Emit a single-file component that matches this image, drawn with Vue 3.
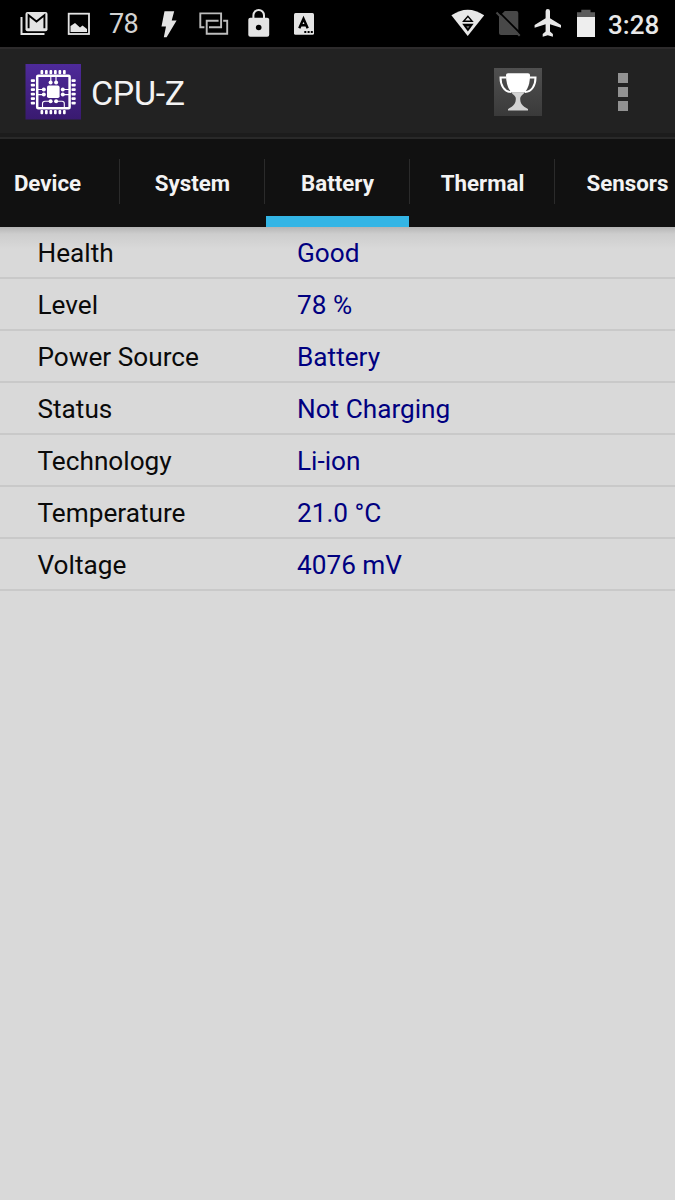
<template>
    <div class="screen">
        <!-- Barra de estado -->
        <div class="status-bar">
            <div class="notifications">
                <svg class="icon" width="30" height="46" viewBox="19 0 30 46">
                    <path d="M21.5 17V34H44.5" fill="none" stroke="#e4e4e4" stroke-width="2" />
                    <rect x="25.5" y="12" width="22" height="19.3" rx="2" fill="#e4e4e4" />
                    <path d="M28.6 28.3V15.2L36.5 21.6L44.4 15.2V28.3" fill="none" stroke="#000" stroke-width="1.9" />
                </svg>
                <svg class="icon picture" width="24" height="46" viewBox="67 0 24 46">
                    <rect x="68.7" y="13.7" width="20.3" height="20.3" fill="none" stroke="#e4e4e4" stroke-width="1.8" />
                    <path d="M70.5 32V26L75 23L80 27.5L82.5 25.5L87 29V32Z" fill="#e4e4e4" />
                </svg>
                <span class="level">78</span>
                <svg class="icon bolt" width="18" height="46" viewBox="160 0 18 46">
                    <path d="M164.5 11.2H174.2L171.7 20.6H176.6L166.6 37.3H163.8L166 26.6H161.5Z" fill="#e4e4e4" />
                </svg>
                <svg class="icon rects" width="30" height="46" viewBox="199 0 30 46">
                    <g fill="none" stroke="#bdbdbd" stroke-width="1.9">
                        <path d="M204.4 27.3H200.3V13.4H221.1V27.3H209" />
                        <path d="M218.6 20.8H206.7V33.8H227.2V20.8H223.2" />
                    </g>
                </svg>
                <svg class="icon lock" width="22" height="46" viewBox="248 0 22 46">
                    <path d="M253.4 19V15.3A5.3 5.3 0 0 1 264 15.3V19" fill="none" stroke="#e4e4e4" stroke-width="2" />
                    <rect x="248.3" y="17.7" width="20.9" height="19" rx="2" fill="#e4e4e4" />
                    <circle cx="258.7" cy="27.5" r="2.8" fill="#000" />
                </svg>
                <svg class="icon keyboard" width="22" height="46" viewBox="293 0 22 46">
                    <rect x="294" y="13" width="20" height="21.8" rx="1.5" fill="#e4e4e4" />
                    <path d="M299.3 28.3L303.5 18.8L307.7 28.3M301 25.2H306" fill="none" stroke="#000" stroke-width="2.5" />
                    <path d="M304.3 31h2v2h-2zM307.6 31h2v2h-2zM310.8 31h2v2h-2z" fill="#000" />
                </svg>
            </div>
            <div class="system-icons">
                <svg class="icon" width="34" height="46" viewBox="451 0 34 46">
                    <path d="M451.4 15.3Q467.7 4 484.2 15.3L467.7 36Z" fill="#e8e8e8" />
                    <path d="M463.6 21.2L467.9 16.2L472.2 21.2Z" fill="none" stroke="#000" stroke-width="1.4" />
                    <path d="M462.2 23.8H473.6L467.9 31.4Z" fill="#000" />
                    <path d="M466.3 26.2H469.5L467.9 28.4Z" fill="#777" />
                </svg>
                <svg class="icon sim" width="26" height="46" viewBox="495 0 26 46">
                    <path d="M504.8 11H516.3Q518.3 11 518.3 13V35H501Q499 35 499 33V16.7Z" fill="#484848" />
                    <path d="M498.4 11.4L521 34" stroke="#000" stroke-width="1.8" />
                    <path d="M496.5 12.5L519.7 35.7" stroke="#484848" stroke-width="2" />
                </svg>
                <svg class="icon plane" width="28" height="46" viewBox="534 0 28 46">
                    <path d="M561 27.7V25L550 18.2V11.2A2.2 2.2 0 0 0 545.6 11.2V18.2L534.6 25V27.7L545.6 24.3V31.5L542.7 33.9V36.7L547.8 35.2L552.9 36.7V33.9L550 31.5V24.3Z" fill="#e8e8e8" />
                </svg>
                <svg class="icon battery" width="20" height="46" viewBox="576 0 20 46">
                    <path d="M577 17.2V12.3H581.3V9.7H590.5V12.3H595V17.2Z" fill="#5c5c5c" />
                    <rect x="577" y="17" width="18" height="20" fill="#eeeeee" />
                </svg>
                <span class="clock">3:28</span>
            </div>
        </div>

        <!-- Cabecera -->
        <header class="action-bar">
            <svg class="logo" width="56" height="56" viewBox="0 0 56 56">
                <defs>
                    <linearGradient id="purple" x1="0" y1="0" x2="0" y2="1">
                        <stop offset="0" stop-color="#4e2a9a" />
                        <stop offset="1" stop-color="#391a70" />
                    </linearGradient>
                </defs>
                <rect x="0.5" width="55.5" height="55.5" fill="url(#purple)" />
                <rect x="12.2" y="11.7" width="32.4" height="32.6" rx="1" fill="none" stroke="#fff" stroke-width="2.5" />
                <g fill="#fff">
                    <rect v-for="n in 6" :key="'t' + n" :x="11 + n * 4.5" y="6" width="2.7" height="4.2" rx="0.9" />
                    <rect v-for="n in 6" :key="'b' + n" :x="11 + n * 4.5" y="46" width="2.7" height="4.2" rx="0.9" />
                    <rect v-for="n in 6" :key="'l' + n" x="5.8" :y="10.7 + n * 4.5" width="4.2" height="2.7" rx="0.9" />
                    <rect v-for="n in 6" :key="'r' + n" x="46.5" :y="10.7 + n * 4.5" width="4.2" height="2.7" rx="0.9" />
                    <rect x="22" y="21.6" width="12.6" height="12.4" rx="1.8" />
                    <circle v-for="(p, i) in pines" :key="i" :cx="p[0]" :cy="p[1]" r="2" />
                </g>
                <path
                    d="M25.8 12V18M31 12V18M13 25.5H18.5M13 30.6H18.5M38 25.5H44M38 30.6H44M17.5 44V39.5Q17.5 37.3 20 37.3H25.8M39.3 44V39.5Q39.3 37.3 37 37.3H31"
                    fill="none" stroke="#fff" stroke-width="1.1"
                />
            </svg>
            <h1>CPU-Z</h1>
            <button class="trophy">
                <svg width="48" height="48" viewBox="0 0 48 48">
                    <g fill="none" stroke="#fff" stroke-width="2">
                        <path d="M12.5 9.5H6.5C6.5 17 10 23.8 17 24" />
                        <path d="M35.5 9.5H41.5C41.5 17 38 23.8 31 24" />
                    </g>
                    <path d="M12 7Q12 5.3 14 5.3H34Q36 5.3 36 7C36 15 34 21 30.5 24.5H17.5C14 21 12 15 12 7Z" fill="#fff" />
                    <path d="M17.2 24.2H30.8C29.5 26.5 26.5 27.5 26.2 30C26 35 28 38 34 41V42.5H14V41C20 38 22 35 21.8 30C21.5 27.5 18.5 26.5 17.2 24.2Z" fill="#d2d2d2" />
                </svg>
            </button>
            <button class="menu">
                <span></span>
                <span></span>
                <span></span>
            </button>
        </header>

        <!-- Pestañas -->
        <nav class="tabs">
            <button
                v-for="tab in tabs"
                :key="tab"
                class="tab"
                :class="{ active: tab === activa }"
                @click="activa = tab"
            >
                {{ tab }}
            </button>
        </nav>

        <!-- Datos de la batería -->
        <div class="lista">
            <div v-for="fila in filas" :key="fila.nombre" class="fila">
                <span class="nombre">{{ fila.nombre }}</span>
                <span class="valor">{{ fila.valor }}</span>
            </div>
        </div>
    </div>
</template>

<script setup>
    import { ref } from 'vue'

    const tabs = ['Device', 'System', 'Battery', 'Thermal', 'Sensors']
    const activa = ref('Battery')

    const filas = ref([
        { nombre: 'Health', valor: 'Good' },
        { nombre: 'Level', valor: '78 %' },
        { nombre: 'Power Source', valor: 'Battery' },
        { nombre: 'Status', valor: 'Not Charging' },
        { nombre: 'Technology', valor: 'Li-ion' },
        { nombre: 'Temperature', valor: '21.0 °C' },
        { nombre: 'Voltage', valor: '4076 mV' }
    ])

    // Contactos alrededor del chip del logo
    const pines = [
        [25.6, 18.4], [31.1, 18.4],
        [18.8, 25.5], [18.8, 30.6],
        [37.8, 25.5], [37.8, 30.6],
        [25.6, 37.3], [31.1, 37.3]
    ]
</script>

<style>
    body {
    margin: 0;
    background: #d9d9d9;
    }
</style>

<style scoped>
    .screen {
    width: 675px;
    height: 1200px;
    overflow: hidden;
    background: #d9d9d9;
    font-family: Roboto, "Liberation Sans", sans-serif;
    }

    button {
    padding: 0;
    border: none;
    background: none;
    font-family: inherit;
    }

    svg {
    display: block;
    }

    .icon {
    flex: none;
    }

    .status-bar {
    display: flex;
    justify-content: space-between;
    box-sizing: border-box;
    height: 49px;
    padding: 0 15px 0 19px;
    background: #000;
    border-bottom: 2px solid #2d2b2c;
    }

    .notifications,
    .system-icons {
    display: flex;
    line-height: 48px;
    }

    .picture {
    margin-left: 18px;
    }

    .level {
    width: 51px;
    margin-left: 18px;
    font-size: 27px;
    letter-spacing: -0.7px;
    line-height: 49px;
    color: #d2d2d2;
    }

    .rects {
    margin-left: 21px;
    }

    .lock {
    margin-left: 19px;
    }

    .keyboard {
    margin-left: 23px;
    }

    .sim {
    margin-left: 10px;
    }

    .plane {
    margin-left: 13px;
    }

    .battery {
    margin-left: 14px;
    }

    .clock {
    width: 52px;
    margin-left: 12px;
    font-size: 26px;
    font-weight: 500;
    line-height: 50px;
    color: #e8e8e8;
    }

    .action-bar {
    display: flex;
    align-items: center;
    box-sizing: border-box;
    height: 90px;
    padding: 0 47px 3px 25px;
    background: #222;
    border-bottom: 2px solid #292929;
    box-shadow: inset 0 -4px #1c1c1c;
    }

    h1 {
    flex: 1;
    margin: 3px 0 0 10px;
    font-size: 34px;
    font-weight: 400;
    letter-spacing: -0.3px;
    color: #f3f3f3;
    }

    .trophy {
    width: 48px;
    height: 48px;
    background: linear-gradient(#505050, #3a3a3a);
    }

    .menu {
    display: flex;
    flex-direction: column;
    gap: 4px;
    margin-left: 76px;
    }

    .menu span {
    width: 10px;
    height: 10px;
    background: #929292;
    }

    .tabs {
    display: flex;
    height: 88px;
    margin-left: -25px;
    background: #111;
    }

    .tab {
    flex: none;
    box-sizing: border-box;
    width: 145px;
    padding-bottom: 1px;
    font-size: 22.3px;
    font-weight: 700;
    color: #f3f3f3;
    background: linear-gradient(#2b2b2b, #2b2b2b) no-repeat 100% 20px / 1px 45px;
    }

    .tab.active {
    background:
        linear-gradient(#33b5e5, #33b5e5) no-repeat 1px 100% / 143px 11px,
        linear-gradient(#2b2b2b, #2b2b2b) no-repeat 100% 20px / 1px 45px;
    }

    .lista {
    background: linear-gradient(#b5b5b5, #cdcdcd 7px, #d9d9d9 22px);
    }

    .fila {
    display: flex;
    align-items: center;
    box-sizing: border-box;
    height: 52px;
    padding: 1px 0 0 37.5px;
    border-bottom: 2px solid #c9c9c9;
    font-size: 26.2px;
    }

    .nombre {
    width: 259.5px;
    color: #0a0a0a;
    }

    .valor {
    color: #000080;
    }
</style>
